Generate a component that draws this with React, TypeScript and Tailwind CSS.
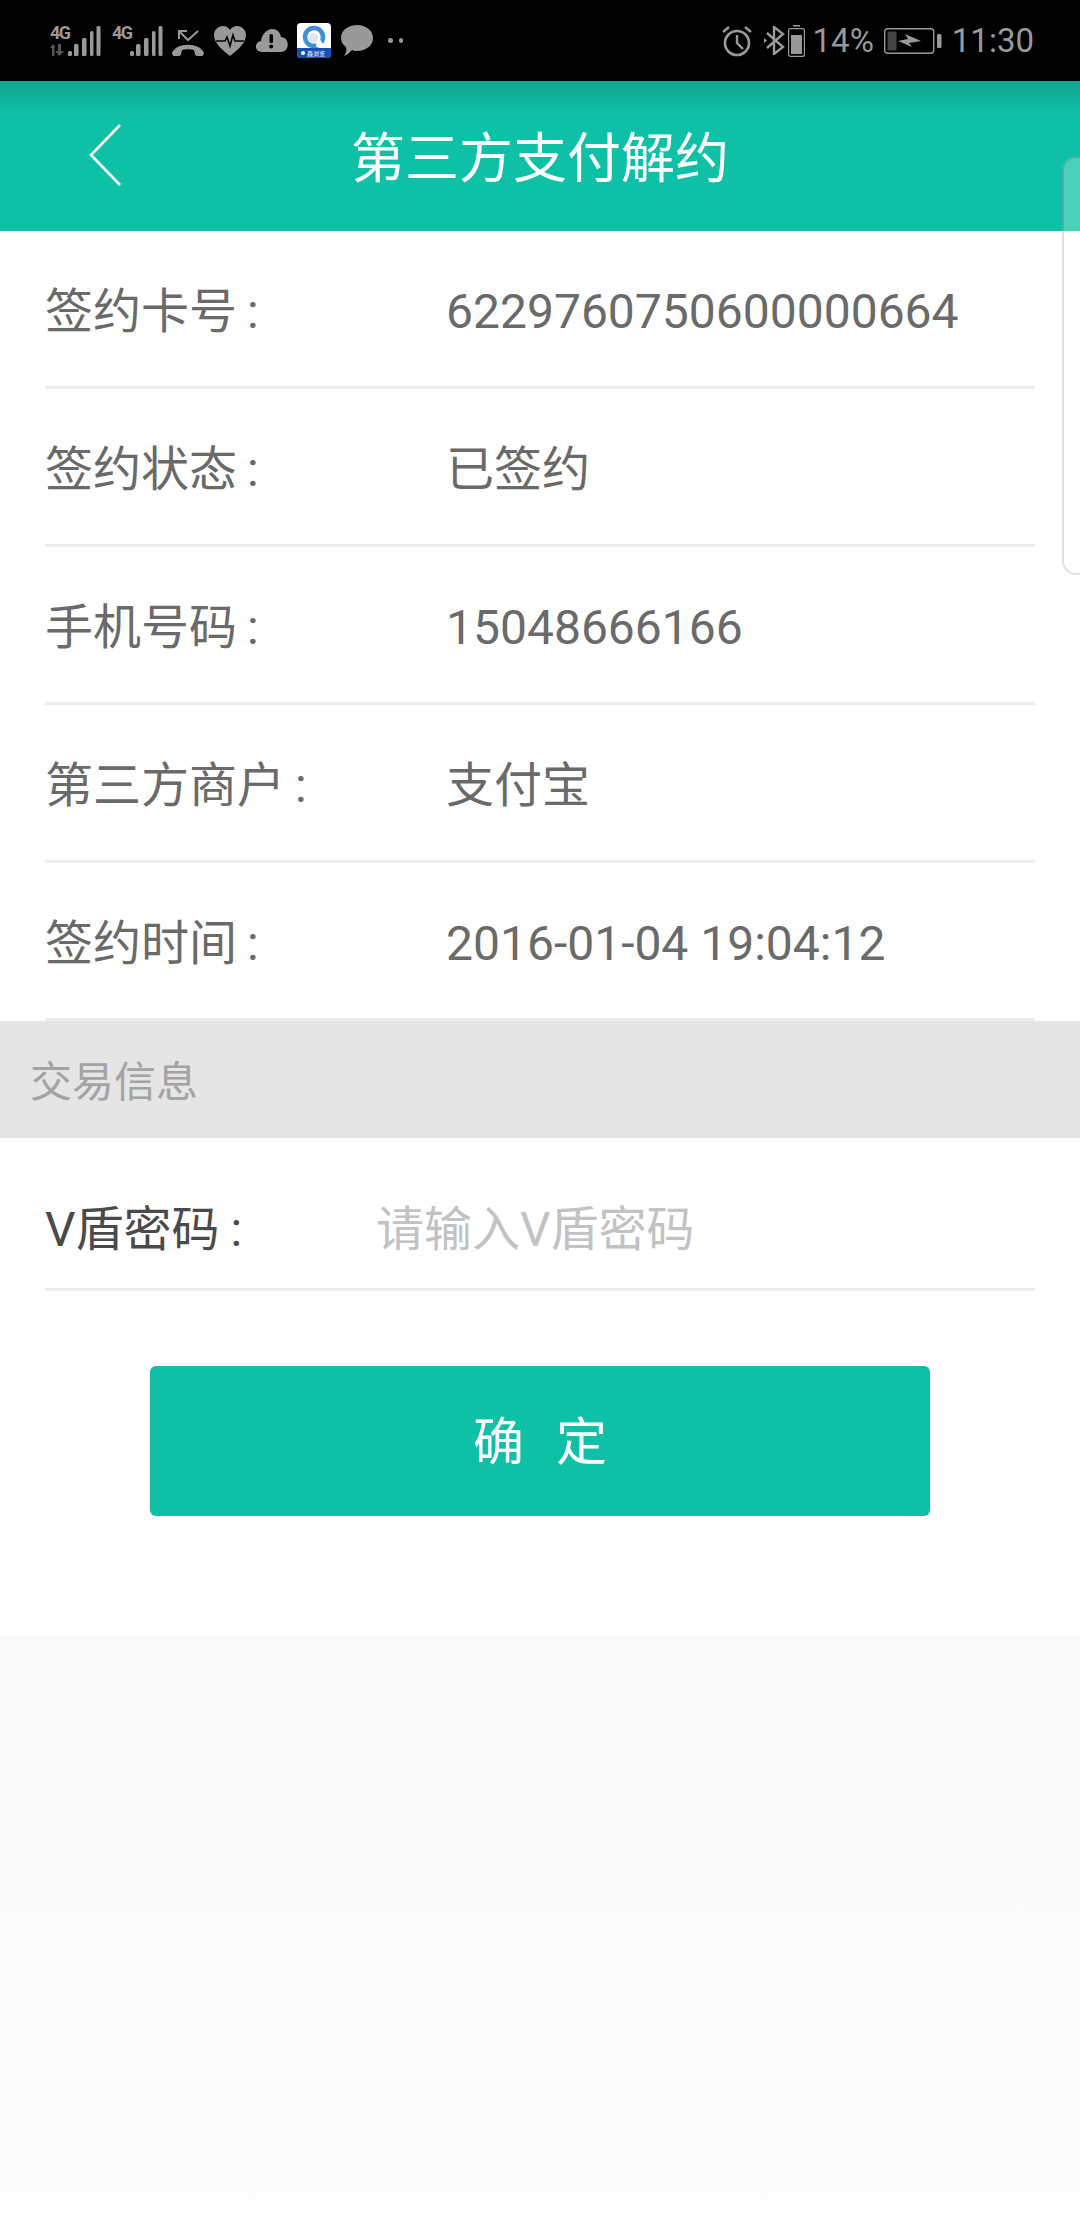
const rows = [
  { label: "签约卡号", value: "6229760750600000664" },
  { label: "签约状态", value: "已签约" },
  { label: "手机号码", value: "15048666166" },
  { label: "第三方商户", value: "支付宝" },
  { label: "签约时间", value: "2016-01-04 19:04:12" },
];

const Signal = ({ second }: { second?: boolean }) => (
  <div className="relative w-[52px] h-[34px]">
    <svg width="52" height="34" viewBox="0 0 52 34" fill="#999">
      {!second && (
        <g fill="#555">
          <rect x="2" y="21" width="2.5" height="11" />
          <path d="M0 24l3-4 2 4zM8 20h3v7h3l-4.5 5L5 27h3z" />
        </g>
      )}
      <rect x="18" y="27" width="4" height="5" rx="1.5" />
      <rect x="24" y="20" width="4.5" height="12" rx="1.5" />
      <rect x="32" y="14" width="4.5" height="18" rx="1.5" />
      <rect x="40" y="7" width="3.5" height="25" rx="1.5" />
      <rect x="46.5" y="2" width="4" height="30" rx="1.5" />
    </svg>
    <span className="absolute left-0 top-0 text-[18px] leading-[18px] font-bold tracking-[-1.5px] text-[#999]">4G</span>
  </div>
);

const MissedCall = () => (
  <svg width="32" height="28" viewBox="0 0 32 28" className="mt-[4px] -ml-[2px]">
    <path d="M7 10V2h8M7 2l9 9 10-9" fill="none" stroke="#999" strokeWidth="2" />
    <path d="M0 24c4-11 28-11 32 0 0 1-1 3-2 3h-5c-1 0-2-1-2-2l-1-4c-3-1-9-1-12 0l-1 4c0 1-1 2-2 2H2c-1 0-2-2-2-3z" fill="#999" />
  </svg>
);

const Heart = () => (
  <svg width="32" height="30" viewBox="0 0 32 30">
    <path d="M16 30C10 25 0 18 0 9 0 4 4 0 9 0c3 0 5 1 7 4 2-3 4-4 7-4 5 0 9 4 9 9 0 9-10 16-16 21z" fill="#999" />
    <path d="M2 15h9l2-4 3 9 3-11 2 6h9" fill="none" stroke="#000" strokeWidth="1.6" />
  </svg>
);

const CloudAlert = () => (
  <svg width="32" height="23" viewBox="0 0 32 23">
    <path d="M6 23c-8 0-8-10-1-11C6 4 12 0 16 0c5 0 8 3 9 8 9 0 9 15 0 15z" fill="#999" />
    <rect x="13.5" y="5" width="3.5" height="9" rx="1.5" fill="#000" />
    <circle cx="15.2" cy="17.5" r="2" fill="#000" />
  </svg>
);

const AppIcon = () => (
  <svg width="34" height="35" viewBox="0 0 34 35" className="-ml-[1px]">
    <rect width="34" height="35" rx="4" fill="#fff" />
    <path d="M0 25h34v6a4 4 0 0 1-4 4H4a4 4 0 0 1-4-4z" fill="#1450b8" />
    <circle cx="17" cy="14" r="9" fill="none" stroke="#3f8fd8" strokeWidth="4.5" />
    <path d="M20 12l8 12h-9z" fill="#fff" />
    <circle cx="16" cy="15" r="5" fill="#dfe8f2" />
    <circle cx="6" cy="30" r="2" fill="#fff" />
    <text x="10" y="32.5" fontSize="6" fill="#fff" fontFamily="'Noto Sans CJK SC', sans-serif">森浏览</text>
  </svg>
);

const Bubble = () => (
  <svg width="32" height="31" viewBox="0 0 32 31">
    <path d="M16 0c9 0 16 5.500 16 13s-7 13-16 13c-2 0-3 0-5-1-2 2-5 5-8 6 2-3 3-6 2-9-3-2-5-5-5-9C0 5.500 7 0 16 0z" fill="#999" />
  </svg>
);

const Alarm = () => (
  <svg width="30" height="32" viewBox="0 0 30 32" fill="none" stroke="#999">
    <circle cx="15" cy="18" r="12" strokeWidth="2.6" />
    <path d="M15 10v8l6 6" strokeWidth="2.4" />
    <path d="M1 7l6-5M29 7l-6-5" strokeWidth="2.4" />
  </svg>
);

const Bluetooth = () => (
  <svg width="21" height="29" viewBox="0 0 21 29" fill="none" stroke="#999" strokeWidth="2.4">
    <path d="M3 7l16 14-9 7V1l9 7L3 22" />
    <path d="M0 12l3 2.500-3 2.500z" fill="#999" stroke="none" />
  </svg>
);

const SmallBattery = () => (
  <svg width="17" height="32" viewBox="0 0 17 32">
    <rect x="5" y="0" width="7" height="1.500" fill="#999" />
    <rect x="0.600" y="3.600" width="15.800" height="27.800" rx="2" fill="none" stroke="#999" strokeWidth="1.200" />
    <rect x="3" y="10" width="11" height="19" fill="#999" />
  </svg>
);

const ChargingBattery = () => (
  <svg width="58" height="26" viewBox="0 0 58 26">
    <rect x="0.700" y="0.700" width="49" height="24.600" rx="3" fill="none" stroke="#999" strokeWidth="1.400" />
    <rect x="3.500" y="3.500" width="9" height="19" rx="1" fill="#444" />
    <path d="M14 13L24 11 21 6 37 13 25 15 28 19z" fill="#999" />
    <rect x="53" y="6" width="4.500" height="14" rx="1.500" fill="#999" />
  </svg>
);

const StatusBar = () => (
  <div className="flex justify-between items-center h-[81px] pl-[50px] pr-[46px] bg-black text-[#999] text-[33px] leading-none">
    <div className="flex items-center gap-[10px]">
      <Signal />
      <Signal second />
      <MissedCall />
      <Heart />
      <CloudAlert />
      <AppIcon />
      <Bubble />
      <div className="flex gap-[6px] ml-[5px]">
        <span className="size-[4.500px] rounded-full bg-[#999]" />
        <span className="size-[4.500px] rounded-full bg-[#999]" />
      </div>
    </div>
    <div className="flex items-center">
      <Alarm />
      <div className="ml-[12px]"><Bluetooth /></div>
      <div className="ml-[3px]"><SmallBattery /></div>
      <span className="ml-[8px]">14%</span>
      <div className="ml-[10px]"><ChargingBattery /></div>
      <span className="ml-[10px]">11:30</span>
    </div>
  </div>
);

const App = () => {
  return (
    <div className="relative flex flex-col w-[1080px] h-[2240px] bg-white font-['Roboto','Noto_Sans_CJK_SC',sans-serif] overflow-hidden">
      <StatusBar />

      <header className="grid grid-cols-[1fr_auto_1fr] items-center h-[150px] bg-[linear-gradient(#10a68f,#0ec0a5_32px)]">
        <svg width="32" height="62" viewBox="0 0 32 62" className="ml-[89px] -mt-[3px]" fill="none" stroke="#fff" strokeWidth="2.600">
          <path d="M31 1L2 31l29 30" />
        </svg>
        <h1 className="text-[54px] text-white font-normal leading-none mt-[8px]">第三方支付解约</h1>
      </header>

      <section>
        {rows.map((row) => (
          <div key={row.label} className="flex items-center h-[158px] mx-[45px] pt-[6px] border-b-[3px] border-[#eeeeee] text-[48px] text-[#6a6a6a]">
            <span className="w-[401px]">
              {row.label}
              <span className="ml-[10px]">:</span>
            </span>
            <span>{row.value}</span>
          </div>
        ))}
      </section>

      <div className="flex items-center h-[117px] pl-[30px] pt-[5px] bg-[#e5e5e5] text-[42px] text-[#a3a3a3]">交易信息</div>

      <div className="flex items-center h-[153px] mx-[45px] pt-[34px] border-b-[3px] border-[#eeeeee] text-[48px]">
        <span className="w-[331px] text-[#4a4a4a]">
          V盾密码
          <span className="ml-[11px]">:</span>
        </span>
        <input
          readOnly
          placeholder="请输入V盾密码"
          className="flex-1 outline-none placeholder:text-[#c2c2c2]"
        />
      </div>

      <button className="flex justify-center items-center gap-[32px] self-center w-[780px] h-[150px] mt-[75px] pt-[5px] rounded-[6px] bg-[#0ec0a5] text-white text-[51px]">
        <span>确</span>
        <span>定</span>
      </button>

      <div className="flex-1 mt-[120px] bg-[linear-gradient(#f9f9f9,#fdfdfd)]" />

      <div className="absolute left-[1062px] top-[156px] w-[18px] h-[419px] rounded-l-[14px] border-y-2 border-l-2 border-[#0000001f] bg-white/25" />
    </div>
  );
};

export default App;
